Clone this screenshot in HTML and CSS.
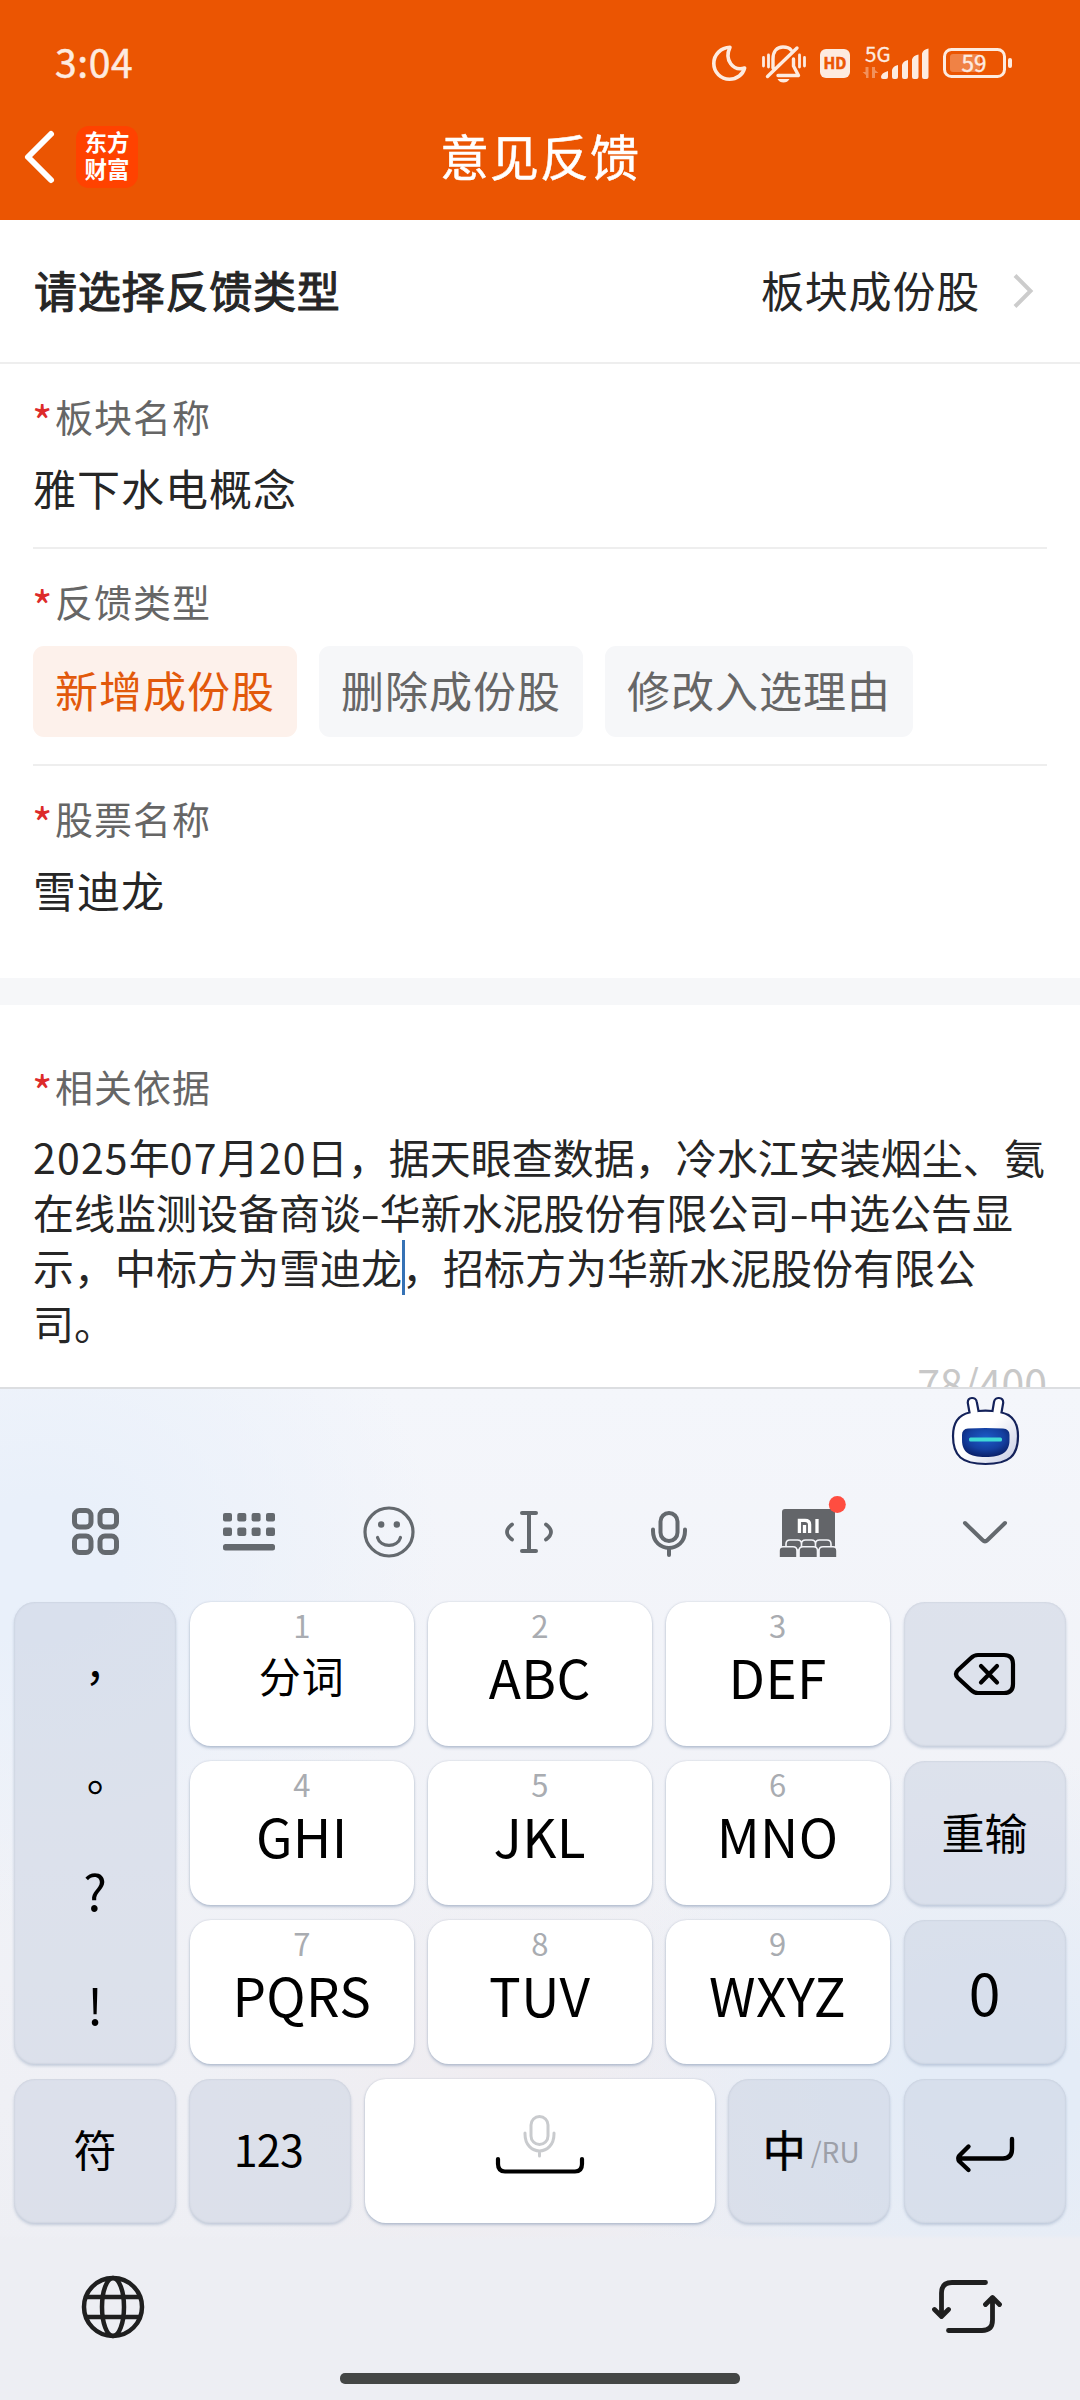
FILE: index.html
```html
<!DOCTYPE html>
<html lang="zh-CN">
<head>
<meta charset="utf-8">
<title>意见反馈</title>
<link rel="stylesheet" href="styles.css">
</head>
<body>
<div class="screen">
  <header class="header">
    <div class="status">
      <span class="time">3:04</span>
      <div class="status-icons">
        <svg class="i-moon" width="34" height="40" viewBox="712 44 34 40"><path d="M730 47.300C721 47.600 713.800 54.500 713.800 63.500C713.800 72.500 721 79.200 729.500 79.200C737 79.200 743 74.500 744.600 68C733 71.500 724 60 730 47.300Z" fill="none" stroke="#fdebe0" stroke-width="3.600" stroke-linejoin="round"/></svg>
        <svg class="i-bell" width="44" height="40" viewBox="762 44 44 40" fill="none" stroke="#fdebe0" stroke-width="3.400" stroke-linecap="round" stroke-linejoin="round"><path d="M773 68V59C773 51 777 47 783 47C787 47 789.500 48 791 50M793.500 59V66L798.500 75.500H778M797 48L767.500 76.500"/><path stroke-width="2.800" d="M763.500 57.500V66M768.500 55V67M799.500 55V67M804.500 57.500V66"/><path d="M777.500 79h12q-2 3.500-6 3.500t-6-3.500z" fill="#fdebe0" stroke="none"/></svg>
        <svg class="i-hd" width="30" height="40" viewBox="820 44 30 40"><rect x="820" y="49" width="30" height="29" rx="6" fill="#fdebe0"/><text x="835" y="69" text-anchor="middle" class="hd">HD</text></svg>
        <svg class="i-signal" width="66" height="40" viewBox="863 44 66 40" fill="#fdebe0"><text x="865" y="61.500" class="fiveg">5G</text><path d="M868.500 67v11h-2.500v-3l-3.500-3h3V67zM872 78V67h3v3l3.500 3h-3.500v5z" opacity=".4"/><path d="M881 77q0-4 7-6v6q0 2-2 2h-3q-2 0-2-2zM892 70q1-4 6-5v12q0 2-2 2h-2q-2 0-2-2zM902 65q1-4 6-5v17q0 2-2 2h-2q-2 0-2-2zM912 59.500q1-4 6.500-5v22.500q0 2-2 2h-2.500q-2 0-2-2zM922 53.500q1-4 6.500-5v28.500q0 2-2 2h-2.500q-2 0-2-2z"/></svg>
        <svg class="i-battery" width="70" height="40" viewBox="943 44 70 40"><rect x="944.500" y="49.500" width="60" height="27" rx="7" fill="none" stroke="#fdebe0" stroke-width="3"/><rect x="950" y="54" width="30" height="18" rx="3" fill="#fdebe0" opacity=".3"/><rect x="1008" y="58" width="4" height="10" rx="2" fill="#fdebe0"/><text x="974" y="71.500" text-anchor="middle" class="batt">59</text></svg>
      </div>
    </div>
    <div class="navbar">
      <div class="nav-left">
        <svg width="32" height="54" viewBox="0 0 32 54"><path d="M27 4L4 27L27 50" fill="none" stroke="#fff" stroke-width="6" stroke-linecap="round" stroke-linejoin="round"/></svg>
        <div class="logo">东方<br>财富</div>
      </div>
      <h1 class="title">意见反馈</h1>
      <div></div>
    </div>
  </header>

  <main class="form">
    <div class="picker">
      <span class="picker-label">请选择反馈类型</span>
      <span class="picker-value">板块成份股</span>
      <svg width="20" height="36" viewBox="0 0 20 36"><path d="M2 2.500L17.500 18L2 33.500" fill="none" stroke="#ccc" stroke-width="4"/></svg>
    </div>
    <section class="field field-board">
      <div class="label"><i>*</i>板块名称</div>
      <div class="value">雅下水电概念</div>
    </section>
    <section class="field field-type">
      <div class="label"><i>*</i>反馈类型</div>
      <div class="chips">
        <span class="chip active">新增成份股</span>
        <span class="chip">删除成份股</span>
        <span class="chip">修改入选理由</span>
      </div>
    </section>
    <section class="field field-stock">
      <div class="label"><i>*</i>股票名称</div>
      <div class="value">雪迪龙</div>
    </section>
    <div class="band"></div>
    <section class="basis">
      <div class="label"><i>*</i>相关依据</div>
      <p class="text"><span class="num">2025</span>年<span class="num">07</span>月<span class="num">20</span>日，据天眼查数据，冷水江安装烟尘、氨<br>在线监测设备商谈<span class="dash">-</span>华新水泥股份有限公司<span class="dash">-</span>中选公告显<br>示，中标方为雪迪龙<span class="caret"></span>，招标方为华新水泥股份有限公<br>司。</p>
      <div class="counter">78/400</div>
    </section>
  </main>

  <div class="keyboard">
    <div class="assistant">
      <svg width="70" height="72" viewBox="950 1395 70 72">
        <defs>
          <linearGradient id="head" x1="0" y1="0" x2="1" y2="1"><stop offset=".5" stop-color="#fff"/><stop offset="1" stop-color="#c3c9e2"/></linearGradient>
          <radialGradient id="visor" cx=".5" cy=".35" r=".65"><stop offset="0" stop-color="#1c5cc8"/><stop offset=".6" stop-color="#143fa0"/><stop offset="1" stop-color="#0a2068"/></radialGradient>
        </defs>
        <path d="M969.500 1412.500L967.800 1403C967.500 1396.500 976 1396.500 976.800 1402L978.500 1411Q985.500 1410.200 992.500 1411L994 1402C994.800 1396.500 1003.500 1396.500 1003.200 1403L1001.500 1412.500C1013 1415 1018 1423 1018 1436C1018 1456 1009 1464 985.500 1464C962 1464 953 1456 953 1436C953 1423 958 1415 969.500 1412.500Z" fill="url(#head)" stroke="#14225a" stroke-width="2.200"/>
        <path d="M968 1428.500Q985.500 1427.500 1003 1428.500Q1009.500 1429 1009.500 1435V1440C1009.500 1452 1002 1457 985.500 1457S962 1452 962 1440V1435Q962 1429 968 1428.500Z" fill="url(#visor)"/>
        <rect x="969" y="1437.500" width="33" height="4" rx="1.500" fill="#3fd9d6"/>
      </svg>
    </div>
    <div class="toolbar">
      <svg width="47" height="47" viewBox="0 0 47 47" fill="none" stroke="#64696e" stroke-width="5"><rect x="2.500" y="2.500" width="16.500" height="16.500" rx="5"/><rect x="28" y="2.500" width="16.500" height="16.500" rx="5"/><rect x="2.500" y="28" width="16.500" height="16.500" rx="5"/><rect x="28" y="28" width="16.500" height="16.500" rx="5"/></svg>
      <svg width="52" height="38" viewBox="0 0 52 38" fill="#64696e"><rect width="9" height="8.500" rx="2"/><rect x="14.300" width="9" height="8.500" rx="2"/><rect x="28.600" width="9" height="8.500" rx="2"/><rect x="43" width="9" height="8.500" rx="2"/><rect y="14.500" width="9" height="8.500" rx="2"/><rect x="14.300" y="14.500" width="9" height="8.500" rx="2"/><rect x="28.600" y="14.500" width="9" height="8.500" rx="2"/><rect x="43" y="14.500" width="9" height="8.500" rx="2"/><rect y="31" width="52" height="6.500" rx="2.500"/></svg>
      <svg width="52" height="52" viewBox="0 0 52 52" fill="none" stroke="#64696e" stroke-width="3.200" stroke-linecap="round"><circle cx="26" cy="26" r="24"/><path d="M14.500 31.500C17.500 42 34.500 42 37.500 31.500"/><circle cx="18.200" cy="18.500" r="3.200" fill="#64696e" stroke="none"/><circle cx="33.800" cy="18.500" r="3.200" fill="#64696e" stroke="none"/></svg>
      <svg width="50" height="44" viewBox="0 0 50 44" fill="none" stroke="#64696e" stroke-width="4" stroke-linecap="round" stroke-linejoin="round"><path d="M18 3H32M18 41H32M25 3V41"/><path d="M8 14.500Q-2 22 8 29.500M42 14.500Q52 22 42 29.500" stroke-width="3.800"/></svg>
      <svg class="mic" width="38" height="46" viewBox="0 0 38 46" fill="none" stroke="#64696e" stroke-width="4" stroke-linecap="round"><rect x="10.500" y="2" width="17" height="28" rx="8.500"/><path d="M3 18.500V20C3 42.500 35 42.500 35 20V18.500M19 37V44"/></svg>
      <svg class="mi" width="78" height="64" viewBox="769 1494 78 64">
        <path d="M782 1548V1511q0-3 3-3h47q3 0 3 3v37z" fill="#636569"/>
        <path d="M799.400 1532V1519.300H805q4.600 0 4.600 4.200V1532M804.500 1524v8M817 1518v14" fill="none" stroke="#fff" stroke-width="3.300"/>
        <g fill="#636569" stroke="#f4f5f9" stroke-width="1.600"><path d="M786 1549v-6q0-4 4-4h7.500q4 0 4 4v6zM801.500 1549v-6q0-4 4-4h6q4 0 4 4v6zM815.500 1549v-6q0-4 4-4h7.500q4 0 4 4v6z"/><path d="M779 1556.800v-7q0-4 4-4h10q4 0 4 4v7zM799 1556.800v-7q0-4 4-4h10.500q4 0 4 4v7zM819 1556.800v-7q0-4 4-4h10q4 0 4 4v7z"/></g>
        <circle cx="837.300" cy="1503.500" r="8.500" fill="#ff4d40"/>
      </svg>
      <svg width="46" height="26" viewBox="0 0 46 26"><path d="M3 4L20.500 21Q23 23.500 25.500 21L43 4" fill="none" stroke="#64696e" stroke-width="4" stroke-linecap="round"/></svg>
    </div>
    <div class="keys">
      <div class="key side punct" lang="zh-TW"><span>，</span><span>。</span><span class="lat">?</span><span class="lat">!</span></div>
      <div class="key"><small>1</small><b class="cn">分词</b></div>
      <div class="key"><small>2</small><b>ABC</b></div>
      <div class="key"><small>3</small><b>DEF</b></div>
      <div class="key side"><svg width="62" height="44" viewBox="0 0 62 44" fill="none" stroke="#000" stroke-width="4.200" stroke-linecap="round" stroke-linejoin="round"><path d="M24 3H50Q59 3 59 12V32Q59 41 50 41H24Q20 41 17 38L4 26Q0 22 4 18L17 6Q20 3 24 3M27 14L43 30.500M43 14L27 30.500"/></svg></div>
      <div class="key"><small>4</small><b>GHI</b></div>
      <div class="key"><small>5</small><b>JKL</b></div>
      <div class="key"><small>6</small><b>MNO</b></div>
      <div class="key side redo"><span>重输</span></div>
      <div class="key"><small>7</small><b>PQRS</b></div>
      <div class="key"><small>8</small><b>TUV</b></div>
      <div class="key"><small>9</small><b>WXYZ</b></div>
      <div class="key side zero">0</div>
    </div>
    <div class="keys-bottom">
      <div class="key side sym">符</div>
      <div class="key side digits">123</div>
      <div class="key space">
        <svg width="33" height="42" viewBox="0 0 33 42" fill="none" stroke="#c9cbce" stroke-width="3" stroke-linecap="round"><rect x="8" y="1.500" width="17" height="28" rx="8.500"/><path d="M2 18V19C2 41.500 31 41.500 31 19V18M16.500 36V41"/></svg>
        <svg width="88" height="17" viewBox="0 0 88 17"><path d="M2 2V7Q2 14.500 9 14.500H79Q86 14.500 86 7V2" fill="none" stroke="#000" stroke-width="4.200" stroke-linecap="round"/></svg>
      </div>
      <div class="key side lang">中<span>/RU</span></div>
      <div class="key side enter"><svg width="60" height="36" viewBox="0 0 60 36" fill="none" stroke="#000" stroke-width="4.400" stroke-linecap="round" stroke-linejoin="round"><path d="M57 3V13Q57 22.500 48 22.500H4M13.500 10.500L4.500 19.500Q2 22.500 4.500 25.500L13.500 34"/></svg></div>
    </div>
    <div class="footer">
      <svg width="64" height="64" viewBox="0 0 64 64" fill="none" stroke="#1f1f1f" stroke-width="4.500"><circle cx="32" cy="32" r="29"/><ellipse cx="32" cy="32" rx="11" ry="29"/><path d="M5 22H59M5 42H59"/></svg>
      <svg width="70" height="54" viewBox="932 2281 70 54" fill="none" stroke="#1f1f1f" stroke-width="4.800" stroke-linecap="round" stroke-linejoin="round"><path d="M985.500 2283.500H952Q941.500 2283.500 941.500 2294V2317M934.500 2310.500L941.500 2317.500L948.500 2310.500M948.500 2331.500H982Q992.500 2331.500 992.500 2321V2299M985.500 2305.500L992.500 2298.500L999.500 2305.500"/></svg>
    </div>
    <div class="home"></div>
  </div>
</div>
</body>
</html>
```

FILE: styles.css
```css
* { box-sizing: border-box; }
body {
  margin: 0;
  font-family: "Noto Sans CJK SC", "Noto Sans", sans-serif;
  color: #262626;
  background: #fff;
}
svg { display: block; flex: none; overflow: visible; }
.screen {
  width: 1080px;
  height: 2400px;
  overflow: hidden;
  display: flex;
  flex-direction: column;
}

/* header */
.header { height: 220px; flex: none; background: #eb5502; color: #fff; }
.status {
  height: 96px;
  padding: 30px 67px 0 55px;
  display: flex;
  align-items: flex-start;
  justify-content: space-between;
}
.time { font-size: 39px; line-height: 62px; letter-spacing: .6px; color: #fdebe0; -webkit-text-stroke: .5px #fdebe0; }
.status-icons { display: flex; margin-top: 14px; }
.i-bell { margin-left: 16px; }
.i-hd { margin-left: 14px; }
.i-signal { margin-left: 13px; }
.i-battery { margin-left: 14px; }
.hd { font-size: 15.500px; font-weight: 700; fill: #eb5502; stroke: #eb5502; stroke-width: .6px; }
.fiveg { font-size: 20.500px; stroke: #fdebe0; stroke-width: .3px; }
.batt { font-size: 22.500px; fill: #fdebe0; stroke: #fdebe0; stroke-width: .4px; }
.navbar {
  height: 124px;
  padding: 0 0 4px 24px;
  display: grid;
  grid-template-columns: 416px 200px 1fr;
  align-items: center;
}
.nav-left { display: flex; align-items: center; gap: 20px; margin-top: 2px; }
.logo {
  width: 62px;
  height: 62px;
  border-radius: 13px;
  background: #ff4200;
  font-size: 22.500px;
  font-weight: 700;
  line-height: 27px;
  padding-top: 2px;
  text-align: center;
}
.title { margin: -3px 0 0; font-size: 49px; line-height: 70px; font-weight: 400; letter-spacing: 1px; white-space: nowrap; -webkit-text-stroke: .5px #fff; }

/* form */
.form { height: 1167px; overflow: hidden; flex: none; }
.picker {
  height: 144px;
  border-bottom: 2px solid #eee;
  padding: 0 47px 0 34px;
  display: flex;
  align-items: center;
  font-size: 43px;
  letter-spacing: .8px;
}
.picker-label { flex: 1; margin-top: -5px; -webkit-text-stroke: 1.100px #262626; }
.picker-value { margin: -5px 33px 0 0; }
.label { font-size: 38px; line-height: 56px; color: #666; letter-spacing: 1px; display: flex; }
.label i { font-style: normal; color: #dd2a2a; width: 23px; font-size: 44px; line-height: 65px; height: 56px; margin-left: -1px; letter-spacing: 0; }
.value { font-size: 43px; line-height: 62px; letter-spacing: 1px; }
.field { margin: 0 33px; border-bottom: 2px solid #eee; }
.field-board { height: 185px; padding-top: 24px; }
.field-board .value, .field-stock .value { margin-top: 12px; }
.field-type { height: 217px; padding-top: 24px; }
.field-stock { height: 212px; padding-top: 24px; border: 0; }
.chips { display: flex; gap: 22px; margin-top: 17px; }
.chip {
  height: 91px;
  line-height: 87px;
  padding: 0 22px;
  border-radius: 11px;
  background: #f6f7f9;
  color: #666;
  font-size: 43px;
  letter-spacing: 1px;
}
.chip.active { background: #fdf1eb; color: #e2590b; }
.band { height: 27px; background: #f6f7f9; }
.basis { padding: 53px 33px 0; }
.text { margin: 15px 0 0; font-size: 41px; line-height: 55px; white-space: nowrap; }
.num { letter-spacing: 1.200px; }
.dash { display: inline-block; width: 18.500px; text-align: center; transform: scaleX(1.400); }
.caret { display: inline-block; width: 3px; height: 55px; margin: 1px -3px 0 0; vertical-align: top; background: #3672b5; }
.counter { font-size: 41px; line-height: 56px; color: #c8c8c8; text-align: right; margin-top: 4px; }

/* keyboard */
.keyboard {
  height: 1013px;
  flex: none;
  border-top: 2px solid #dcdee1;
  background:
    linear-gradient(transparent 846px, #edeef3 850px),
    radial-gradient(ellipse 420px 330px at 1000px 700px, #e4ecf7 20%, transparent 100%),
    radial-gradient(ellipse 320px 260px at 530px 720px, #efecf0 10%, transparent 100%),
    radial-gradient(ellipse 400px 360px at 40px 180px, #e9f0fa 20%, transparent 100%),
    linear-gradient(#f4f6fb, #eff0f5 70%, #edeef3);
  color: #000;
}
.assistant { height: 78px; padding: 6px 60px 0; display: flex; justify-content: flex-end; }
.toolbar {
  height: 135px;
  padding-bottom: 6px;
  display: grid;
  grid-template-columns: 190px 118px 162px 118px 162px 116px 238px;
  align-items: center;
  justify-items: center;
}
.mic { margin-top: 4px; }
.mi { margin-bottom: 10px; }
.keys {
  padding: 0 14.500px 0 14px;
  display: grid;
  grid-template-columns: 162px 224px 224px 224px 162px;
  grid-auto-rows: 144px;
  justify-content: space-between;
  row-gap: 15px;
}
.key {
  border-radius: 21px;
  background: #fff;
  box-shadow: 0 2px 3px rgba(130, 150, 180, .5), 0 0 2px rgba(130, 140, 160, .35);
  display: flex;
  align-items: center;
  justify-content: center;
  font-size: 43px;
  line-height: 1;
}
.key:not(.side):not(.space) { flex-direction: column; justify-content: flex-start; }
.key small { font-size: 31px; line-height: 36px; margin-top: 5px; color: #a9acb1; }
.key b { font-weight: 400; font-size: 53px; line-height: 66px; letter-spacing: .4px; }
.key b.cn { font-size: 42px; line-height: 64px; letter-spacing: 1px; }
.side { background: rgba(205, 213, 226, .56); box-shadow: 0 2px 3px rgba(130, 150, 180, .4), inset 0 0 2px rgba(130, 140, 160, .35); }
.punct { grid-row: span 3; flex-direction: column; justify-content: flex-start; padding-top: 18px; font-family: "Noto Sans CJK TC", sans-serif; }
.punct span { height: 110px; line-height: 110px; }
.punct .lat { font-size: 50px; line-height: 98px; }
.punct .lat:last-child { line-height: 106px; }
.redo { padding-bottom: 3px; }
.zero { font-size: 57px; padding-bottom: 2px; }
.sym, .digits { padding-bottom: 5px; }
.keys-bottom {
  margin-top: 15px;
  padding: 0 14.500px 0 14px;
  height: 144px;
  display: grid;
  grid-template-columns: 162px 162px 350px 162px 162px;
  justify-content: space-between;
}
.digits { padding-right: 4px; letter-spacing: -.8px; }
.space { flex-direction: column; padding-bottom: 13px; }
.lang { font-size: 43px; padding: 0 0 5px 4px; -webkit-text-stroke: .5px #000; gap: 5px; }
.lang span { font-size: 28px; color: #9da0a8; -webkit-text-stroke: 0; padding-top: 5px; }
.enter { padding-top: 5px; }
.footer { height: 150px; padding: 21px 78px 0 81px; display: flex; justify-content: space-between; align-items: center; }
.footer svg { margin-bottom: 3px; }
.home { width: 400px; height: 11px; margin: 0 auto; border-radius: 5px; background: #444645; }
```
